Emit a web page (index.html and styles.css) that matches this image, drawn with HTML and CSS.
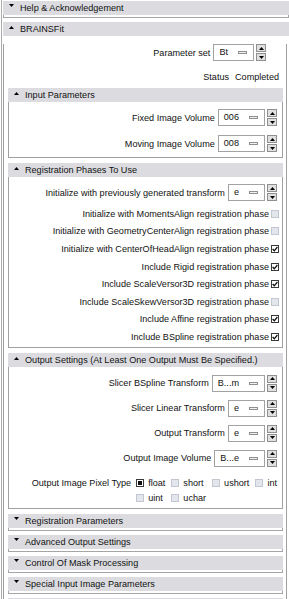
FILE: index.html
```html
<!DOCTYPE html>
<html>
<head>
<meta charset="utf-8">
<link rel="stylesheet" href="styles.css">
</head>
<body>
<div class="page">
  <section class="cb top collapsed">
    <div class="hdr"><svg class="arr" width="5" height="3" viewBox="0 0 5 3"><path d="M0 0H5L2.5 3z"/></svg><span>Help &amp; Acknowledgement</span></div>
    <div class="cframe"></div>
  </section>

  <section class="cb top">
    <div class="hdr"><svg class="arr upa" width="5" height="3" viewBox="0 0 5 3"><path d="M0 3H5L2.5 0z"/></svg><span>BRAINSFit</span></div>
    <div class="frame main">
      <div class="frow pset">
        <span class="lbl">Parameter set</span>
        <span class="combo"><span class="ctext">Bt</span><span class="dash"></span></span>
        <span class="spin"><span class="sb"><svg width="5" height="3" viewBox="0 0 5 3"><path d="M0 3H5L2.5 0z"/></svg></span><span class="sb"><svg width="5" height="3" viewBox="0 0 5 3"><path d="M0 0H5L2.5 3z"/></svg></span></span>
      </div>
      <div class="status"><span>Status</span><span>Completed</span></div>

      <section class="cb sub first">
        <div class="hdr"><svg class="arr upa" width="5" height="3" viewBox="0 0 5 3"><path d="M0 3H5L2.5 0z"/></svg><span>Input Parameters</span></div>
        <div class="frame inputs">
          <div class="frow">
            <span class="lbl">Fixed Image Volume</span>
            <span class="combo"><span class="ctext">006</span><span class="dash"></span></span>
            <span class="spin"><span class="sb"><svg width="5" height="3" viewBox="0 0 5 3"><path d="M0 3H5L2.5 0z"/></svg></span><span class="sb"><svg width="5" height="3" viewBox="0 0 5 3"><path d="M0 0H5L2.5 3z"/></svg></span></span>
          </div>
          <div class="frow">
            <span class="lbl">Moving Image Volume</span>
            <span class="combo"><span class="ctext">008</span><span class="dash"></span></span>
            <span class="spin"><span class="sb"><svg width="5" height="3" viewBox="0 0 5 3"><path d="M0 3H5L2.5 0z"/></svg></span><span class="sb"><svg width="5" height="3" viewBox="0 0 5 3"><path d="M0 0H5L2.5 3z"/></svg></span></span>
          </div>
        </div>
      </section>

      <section class="cb sub">
        <div class="hdr"><svg class="arr upa" width="5" height="3" viewBox="0 0 5 3"><path d="M0 3H5L2.5 0z"/></svg><span>Registration Phases To Use</span></div>
        <div class="frame phases">
          <div class="frow">
            <span class="lbl">Initialize with previously generated transform</span>
            <span class="combo"><span class="ctext">e</span><span class="dash"></span></span>
            <span class="spin"><span class="sb"><svg width="5" height="3" viewBox="0 0 5 3"><path d="M0 3H5L2.5 0z"/></svg></span><span class="sb"><svg width="5" height="3" viewBox="0 0 5 3"><path d="M0 0H5L2.5 3z"/></svg></span></span>
          </div>
          <div class="checks">
            <div class="crow"><span>Initialize with MomentsAlign registration phase</span><span class="chk off"></span></div>
            <div class="crow"><span>Initialize with GeometryCenterAlign registration phase</span><span class="chk off"></span></div>
            <div class="crow"><span>Initialize with CenterOfHeadAlign registration phase</span><span class="chk on"><svg width="6" height="6" viewBox="0 0 6 6"><path d="M0.6 3L2.3 4.8L5.4 1" fill="none" stroke="#111" stroke-width="1.3"/></svg></span></div>
            <div class="crow"><span>Include Rigid registration phase</span><span class="chk on"><svg width="6" height="6" viewBox="0 0 6 6"><path d="M0.6 3L2.3 4.8L5.4 1" fill="none" stroke="#111" stroke-width="1.3"/></svg></span></div>
            <div class="crow"><span>Include ScaleVersor3D registration phase</span><span class="chk on"><svg width="6" height="6" viewBox="0 0 6 6"><path d="M0.6 3L2.3 4.8L5.4 1" fill="none" stroke="#111" stroke-width="1.3"/></svg></span></div>
            <div class="crow"><span>Include ScaleSkewVersor3D registration phase</span><span class="chk off"></span></div>
            <div class="crow"><span>Include Affine registration phase</span><span class="chk on"><svg width="6" height="6" viewBox="0 0 6 6"><path d="M0.6 3L2.3 4.8L5.4 1" fill="none" stroke="#111" stroke-width="1.3"/></svg></span></div>
            <div class="crow"><span>Include BSpline registration phase</span><span class="chk on"><svg width="6" height="6" viewBox="0 0 6 6"><path d="M0.6 3L2.3 4.8L5.4 1" fill="none" stroke="#111" stroke-width="1.3"/></svg></span></div>
          </div>
        </div>
      </section>

      <section class="cb sub">
        <div class="hdr"><svg class="arr upa" width="5" height="3" viewBox="0 0 5 3"><path d="M0 3H5L2.5 0z"/></svg><span>Output Settings (At Least One Output Must Be Specified.)</span></div>
        <div class="frame outputs">
          <div class="frow">
            <span class="lbl">Slicer BSpline Transform</span>
            <span class="combo"><span class="ctext">B...m</span><span class="dash"></span></span>
            <span class="spin"><span class="sb"><svg width="5" height="3" viewBox="0 0 5 3"><path d="M0 3H5L2.5 0z"/></svg></span><span class="sb"><svg width="5" height="3" viewBox="0 0 5 3"><path d="M0 0H5L2.5 3z"/></svg></span></span>
          </div>
          <div class="frow">
            <span class="lbl">Slicer Linear Transform</span>
            <span class="combo"><span class="ctext">e</span><span class="dash"></span></span>
            <span class="spin"><span class="sb"><svg width="5" height="3" viewBox="0 0 5 3"><path d="M0 3H5L2.5 0z"/></svg></span><span class="sb"><svg width="5" height="3" viewBox="0 0 5 3"><path d="M0 0H5L2.5 3z"/></svg></span></span>
          </div>
          <div class="frow">
            <span class="lbl">Output Transform</span>
            <span class="combo"><span class="ctext">e</span><span class="dash"></span></span>
            <span class="spin"><span class="sb"><svg width="5" height="3" viewBox="0 0 5 3"><path d="M0 3H5L2.5 0z"/></svg></span><span class="sb"><svg width="5" height="3" viewBox="0 0 5 3"><path d="M0 0H5L2.5 3z"/></svg></span></span>
          </div>
          <div class="frow">
            <span class="lbl">Output Image Volume</span>
            <span class="combo"><span class="ctext">B...e</span><span class="dash"></span></span>
            <span class="spin"><span class="sb"><svg width="5" height="3" viewBox="0 0 5 3"><path d="M0 3H5L2.5 0z"/></svg></span><span class="sb"><svg width="5" height="3" viewBox="0 0 5 3"><path d="M0 0H5L2.5 3z"/></svg></span></span>
          </div>
          <div class="ptype">
            <span class="lbl">Output Image Pixel Type</span>
            <div class="pgrid">
              <span class="opt"><span class="chk sel"><span class="dot"></span></span>float</span>
              <span class="opt"><span class="chk off"></span>short</span>
              <span class="opt"><span class="chk off"></span>ushort</span>
              <span class="opt"><span class="chk off"></span>int</span>
              <span class="opt"><span class="chk off"></span>uint</span>
              <span class="opt"><span class="chk off"></span>uchar</span>
            </div>
          </div>
        </div>
      </section>

      <section class="cb sub collapsed">
        <div class="hdr"><svg class="arr" width="5" height="3" viewBox="0 0 5 3"><path d="M0 0H5L2.5 3z"/></svg><span>Registration Parameters</span></div>
        <div class="cframe"></div>
      </section>
      <section class="cb sub collapsed">
        <div class="hdr"><svg class="arr" width="5" height="3" viewBox="0 0 5 3"><path d="M0 0H5L2.5 3z"/></svg><span>Advanced Output Settings</span></div>
        <div class="cframe"></div>
      </section>
      <section class="cb sub collapsed">
        <div class="hdr"><svg class="arr" width="5" height="3" viewBox="0 0 5 3"><path d="M0 0H5L2.5 3z"/></svg><span>Control Of Mask Processing</span></div>
        <div class="cframe"></div>
      </section>
      <section class="cb sub collapsed">
        <div class="hdr"><svg class="arr" width="5" height="3" viewBox="0 0 5 3"><path d="M0 0H5L2.5 3z"/></svg><span>Special Input Image Parameters</span></div>
        <div class="cframe"></div>
      </section>
      <section class="cb sub collapsed">
        <div class="hdr"></div>
      </section>
    </div>
  </section>
</div>
</body>
</html>
```

FILE: styles.css
```css
html, body {
  margin: 0;
  padding: 0;
  overflow: hidden;
  background: #ffffff;
}
body {
  width: 289px;
  height: 599px;
  font-family: "Liberation Sans", Arial, sans-serif;
  font-size: 9.1px;
  color: #111111;
}
.page {
  margin-left: 1px;
  border-left: 1px solid #ababab;
  padding: 1px 0 0 1px;
  min-height: 700px;
}
.hdr {
  height: 14px;
  line-height: 14px;
  background: #dcdce0;
  display: flex;
  align-items: flex-start;
  white-space: nowrap;
  overflow: hidden;
  padding-left: 6px;
}
.arr {
  flex: none;
  margin-top: 3px;
  margin-right: 6px;
  fill: #000;
}
.arr.upa {
  margin-top: 4px;
}
.cframe {
  height: 2px;
  border: 1px solid #a6a6a6;
  border-top: none;
}
.top.collapsed {
  margin-bottom: 4px;
}
.frame {
  border: 1px solid #a0a0a0;
  border-top: none;
  background: #ffffff;
}
.main {
  margin-right: 2px;
  padding: 0 3px 0 4px;
  min-height: 600px;
}
.sub {
  margin-bottom: 5px;
}
.sub.collapsed {
  margin-bottom: 4px;
}
.sub.first {
  margin-top: 3px;
}
.frow {
  display: flex;
  justify-content: flex-end;
  align-items: center;
  gap: 3px;
  height: 17px;
  white-space: nowrap;
}
.pset {
  margin-top: 8px;
  padding-right: 17px;
}
.status {
  display: flex;
  justify-content: flex-end;
  gap: 6px;
  height: 15px;
  line-height: 15px;
  margin-top: 9px;
  padding-right: 4px;
}
.inputs {
  padding: 7px 5px 5px 0;
  display: flex;
  flex-direction: column;
  gap: 9px;
}
.phases {
  padding: 7px 0 1px 0;
}
.phases .frow {
  padding-right: 5px;
}
.checks {
  margin-top: 4px;
}
.crow {
  display: flex;
  justify-content: flex-end;
  align-items: center;
  gap: 2px;
  height: 17.6px;
  padding-right: 3px;
  white-space: nowrap;
}
.outputs {
  padding: 8px 5px 2px 0;
}
.outputs .frow + .frow {
  margin-top: 8px;
}
.combo {
  display: inline-flex;
  align-items: center;
  height: 17px;
  box-sizing: border-box;
  border: 1px solid #a2a2a2;
  background: #ffffff;
  padding: 0 6px 0 5px;
  margin-left: 0;
}
.ctext {
  line-height: 15px;
}
.dash {
  width: 9px;
  height: 3px;
  box-sizing: border-box;
  border: 1px solid #8e8e8e;
  background: #f2f2f2;
  margin-left: 10px;
}
.spin {
  display: flex;
  flex-direction: column;
  width: 10px;
  height: 17px;
  margin-left: -1px;
  gap: 1px;
}
.sb {
  flex: 1;
  box-sizing: border-box;
  border: 1px solid #8f8f8f;
  background: #e0e0e0;
  display: flex;
  align-items: center;
  justify-content: center;
}
.sb svg {
  fill: #000;
}
.chk {
  width: 8px;
  height: 8px;
  box-sizing: border-box;
  flex: none;
  display: flex;
  align-items: center;
  justify-content: center;
}
.chk.off {
  border: 1px solid #c3c7d1;
  background: #e3e6ed;
}
.chk.on {
  border: 1px solid #3a3a3a;
  background: #ffffff;
}
.chk.sel {
  border: 1px solid #3a3a3a;
  background: #ffffff;
}
.dot {
  width: 4px;
  height: 4px;
  background: #111;
}
.ptype {
  display: flex;
  justify-content: flex-end;
  align-items: flex-start;
  gap: 5px;
  margin-top: 9px;
  white-space: nowrap;
}
.ptype .lbl {
  line-height: 15px;
}
.pgrid {
  display: grid;
  grid-template-columns: repeat(4, auto);
  grid-auto-rows: 15px;
  column-gap: 6px;
}
.opt {
  display: flex;
  align-items: center;
  gap: 4px;
}
```
